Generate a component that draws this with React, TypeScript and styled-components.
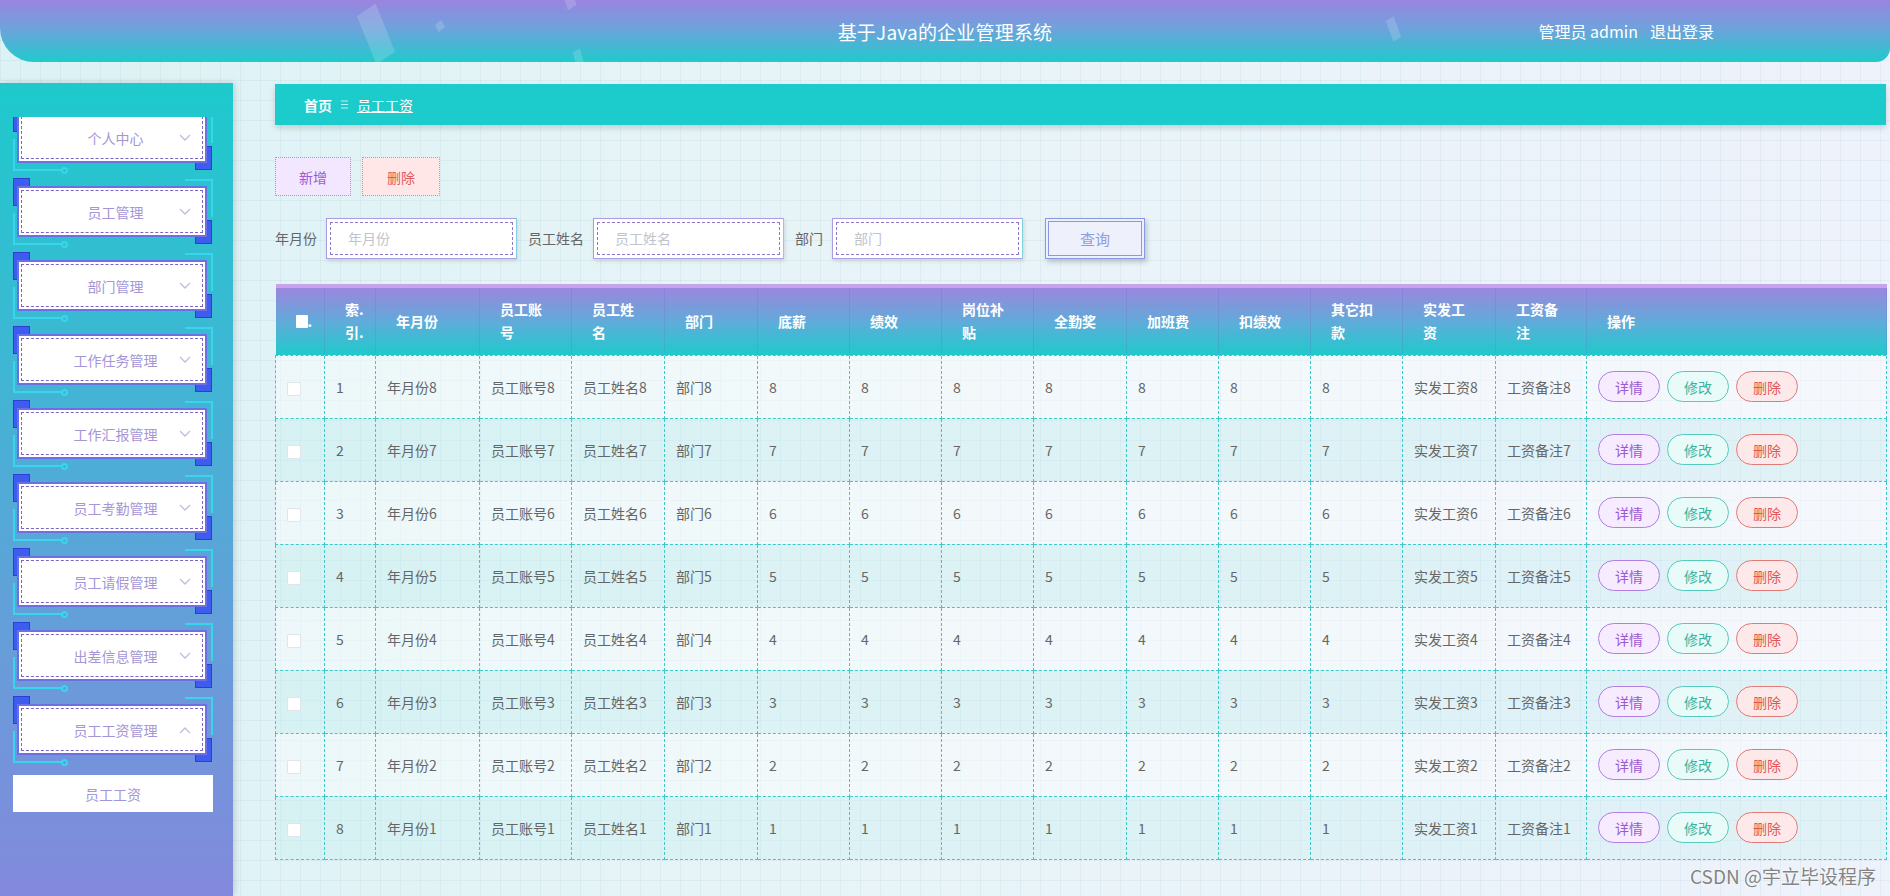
import React from 'react'
import styled, { createGlobalStyle, css } from 'styled-components'

const GlobalStyle = createGlobalStyle`
  html, body {
    margin: 0;
    padding: 0;
  }
  body {
    font-family: "Noto Sans CJK SC", "Noto Sans", sans-serif;
  }
  * {
    box-sizing: border-box;
  }
`

const Page = styled.div`
  position: relative;
  width: 1890px;
  height: 896px;
  overflow: hidden;
  background-color: #e8f4f7;
  background-image: linear-gradient(rgba(160, 195, 212, 0.16) 1px, transparent 1px),
    linear-gradient(90deg, rgba(160, 195, 212, 0.16) 1px, transparent 1px),
    linear-gradient(90deg, #dcf2f4 0%, #e7f4f7 40%, #eef2fb 100%);
  background-size: 20px 20px, 20px 20px, 100% 100%;
`

const TopBar = styled.header`
  position: relative;
  height: 62px;
  overflow: hidden;
  display: grid;
  grid-template-columns: 1fr auto 1fr;
  align-items: center;
  color: #fff;
  background: linear-gradient(180deg, #9a84e0 0%, #6fa2dc 45%, #1fcacc 100%);
  border-radius: 0 0 14px 34px;
`

const Shard = styled.span<{ $l: number; $t: number; $w: number; $h: number; $r: number }>`
  position: absolute;
  left: ${(p) => p.$l}px;
  top: ${(p) => p.$t}px;
  width: ${(p) => p.$w}px;
  height: ${(p) => p.$h}px;
  transform: rotate(${(p) => p.$r}deg) skewY(-12deg);
  background: rgba(255, 255, 255, 0.16);
`

const Title = styled.h1`
  grid-column: 2;
  margin: 0;
  font-size: 19px;
  font-weight: 400;
  letter-spacing: 0.2px;
`

const UserBox = styled.div`
  grid-column: 3;
  justify-self: end;
  display: flex;
  gap: 12px;
  padding-right: 176px;
  font-size: 16px;
`

const Body = styled.div`
  display: flex;
  align-items: flex-start;
`

const Sidebar = styled.aside`
  flex-shrink: 0;
  width: 233px;
  height: 813px;
  margin-top: 21px;
  padding-top: 34px;
  background: linear-gradient(180deg, #1dcacc 0%, #3fb6d4 35%, #62a0d9 65%, #8389dd 100%);
  box-shadow: 2px 0 6px rgba(0, 0, 0, 0.15);
`

const MenuViewport = styled.div`
  overflow: hidden;
`

const MenuList = styled.div`
  margin-top: -13px;
`

const MenuUnit = styled.div`
  position: relative;
  height: 74px;
  padding-top: 8px;
`

const Deco = styled.span<{ $l: number; $t: number; $w: number; $h: number; $kind: 'block' | 'line' }>`
  position: absolute;
  left: ${(p) => p.$l}px;
  top: ${(p) => p.$t}px;
  width: ${(p) => p.$w}px;
  height: ${(p) => p.$h}px;
  ${(p) =>
    p.$kind === 'block'
      ? css`
          background: #3f5cf0;
          box-shadow: inset 0 0 0 1px #2a40d0;
        `
      : css`
          background: #37d6ec;
        `}
`

const DecoDot = styled.span`
  position: absolute;
  left: 61px;
  top: 63px;
  width: 7px;
  height: 7px;
  border-radius: 50%;
  border: 2px solid #37d6ec;
`

const MenuBox = styled.div`
  position: relative;
  z-index: 1;
  width: 190px;
  height: 51px;
  margin-left: 17px;
  display: flex;
  align-items: center;
  justify-content: center;
  padding-left: 7px;
  background: #fff;
  border: 2px solid #6b70e2;
  outline: 1px dashed #7a66c6;
  outline-offset: -5px;
  color: #a596d6;
  font-size: 14px;
`

const Chevron = styled.svg`
  position: absolute;
  right: 14px;
  top: 50%;
  margin-top: -4px;
`

const SubItem = styled.div`
  width: 200px;
  height: 37px;
  margin: 5px 0 0 13px;
  display: flex;
  align-items: center;
  justify-content: center;
  background: #fff;
  color: #a596d6;
  font-size: 14px;
`

const Main = styled.main`
  width: 1611px;
  margin: 22px 0 0 42px;
`

const Crumbs = styled.div`
  height: 41px;
  display: flex;
  align-items: center;
  gap: 9px;
  padding-left: 29px;
  background: #1ccbcc;
  box-shadow: 0 3px 6px rgba(0, 0, 0, 0.15);
  color: #fff;
  font-size: 14px;
`

const CrumbHome = styled.span`
  font-weight: 700;
`

const CrumbCurrent = styled.span`
  text-decoration: underline;
`

const Toolbar = styled.div`
  display: flex;
  gap: 11px;
  margin-top: 32px;
`

const toolTones = {
  add: { bg: '#f3e6ff', border: '#b78de2', color: '#9a5cd6' },
  del: { bg: '#ffe7e8', border: '#e28c8c', color: '#e05a5a' },
}

const ToolButton = styled.button<{ $tone: 'add' | 'del' }>`
  width: ${(p) => (p.$tone === 'add' ? 76 : 78)}px;
  height: 39px;
  padding: 0;
  font-family: inherit;
  font-size: 14px;
  background: ${(p) => toolTones[p.$tone].bg};
  border: 1px dotted ${(p) => toolTones[p.$tone].border};
  color: ${(p) => toolTones[p.$tone].color};
`

const SearchRow = styled.div`
  display: flex;
  align-items: center;
  height: 42px;
  margin-top: 21px;
`

const Label = styled.label`
  margin-right: 9px;
  font-size: 14px;
  color: #666;
`

const InputShell = styled.div`
  width: 191px;
  height: 41px;
  margin-right: 11px;
  background: #fff;
  border: 1px solid #a99ee2;
  border-right-color: #7fd3dc;
  box-shadow: 1px 2px 4px rgba(0, 0, 0, 0.12);
  outline: 1px dashed #8c78d0;
  outline-offset: -5px;
`

const Field = styled.input`
  width: 100%;
  height: 100%;
  padding: 0 0 0 21px;
  border: none;
  background: transparent;
  font-family: inherit;
  font-size: 14px;
  color: #666;
  outline: none;
  &::placeholder {
    color: #c0c4cc;
  }
`

const SearchButton = styled.button`
  width: 100px;
  height: 41px;
  margin-left: 11px;
  padding: 0;
  font-family: inherit;
  font-size: 15px;
  color: #8d9de2;
  background: #eef1fb;
  border: 4px double #8798e6;
  box-shadow: 2px 3px 5px rgba(0, 0, 0, 0.2);
`

const Grid = styled.table`
  width: 1611px;
  margin-top: 25px;
  border-collapse: collapse;
  table-layout: fixed;
  border-top: 4px solid #c7a3ec;
`

const HeadCell = styled.th<{ $nowrap?: boolean }>`
  height: 69px;
  padding: 0 20px;
  text-align: left;
  font-size: 14px;
  font-weight: 700;
  line-height: 23px;
  color: #fff;
  white-space: ${(p) => (p.$nowrap ? 'nowrap' : 'normal')};
  background: linear-gradient(180deg, #9b86de 0%, #5aaed8 55%, #1ecacc 100%);
  border-right: 1px solid rgba(110, 100, 200, 0.22);
`

const HeadCheck = styled.span`
  display: inline-block;
  width: 12px;
  height: 13px;
  vertical-align: -1px;
  background: #fff;
  border-radius: 1px;
`

const Row = styled.tr<{ $odd: boolean }>`
  background: ${(p) => (p.$odd ? 'rgba(255, 255, 255, 0.42)' : 'rgba(196, 238, 238, 0.32)')};
`

const Cell = styled.td`
  height: 63px;
  padding: 0 11px;
  font-size: 14px;
  color: #666;
  white-space: nowrap;
  border: 1px dashed #3fc8c8;
`

const RowCheck = styled.span`
  display: inline-block;
  width: 14px;
  height: 14px;
  vertical-align: middle;
  background: #fff;
  border: 1px solid #e1e4ea;
  border-radius: 2px;
`

const Actions = styled.div`
  display: flex;
  gap: 7px;
`

const actTones = {
  view: { bg: '#f6ebff', border: '#b17fe2', color: '#9b59d2' },
  edit: { bg: '#e8fbf8', border: '#55cbbd', color: '#36b3a2' },
  del: { bg: '#fde9e9', border: '#e27a78', color: '#e05555' },
}

const ActButton = styled.button<{ $tone: 'view' | 'edit' | 'del' }>`
  width: 62px;
  height: 31px;
  padding: 0;
  border-radius: 16px;
  font-family: inherit;
  font-size: 14px;
  background: ${(p) => actTones[p.$tone].bg};
  border: 1px solid ${(p) => actTones[p.$tone].border};
  color: ${(p) => actTones[p.$tone].color};
`

const Watermark = styled.div`
  position: absolute;
  right: 14px;
  bottom: 7px;
  font-size: 19px;
  color: rgba(110, 110, 110, 0.85);
  text-shadow: 0 0 2px rgba(255, 255, 255, 0.9);
`

const menus = [
  '个人中心',
  '员工管理',
  '部门管理',
  '工作任务管理',
  '工作汇报管理',
  '员工考勤管理',
  '员工请假管理',
  '出差信息管理',
  '员工工资管理',
]

const columns = [
  { w: 49, label: <><HeadCheck />.</>, nowrap: true },
  { w: 51, label: '索.引.' },
  { w: 104, label: '年月份' },
  { w: 92, label: '员工账号' },
  { w: 93, label: '员工姓名' },
  { w: 93, label: '部门' },
  { w: 92, label: '底薪' },
  { w: 92, label: '绩效' },
  { w: 92, label: '岗位补贴' },
  { w: 93, label: '全勤奖' },
  { w: 92, label: '加班费' },
  { w: 92, label: '扣绩效' },
  { w: 92, label: '其它扣款' },
  { w: 93, label: '实发工资' },
  { w: 91, label: '工资备注' },
  { w: 300, label: '操作' },
]

const rows = Array.from({ length: 8 }, (_, i) => i + 1)

const MenuItem = ({ label, open }: { label: string; open?: boolean }) => (
  <MenuUnit>
    <Deco $kind="block" $l={13} $t={0} $w={17} $h={28} />
    <Deco $kind="line" $l={13} $t={35} $w={2} $h={32} />
    <Deco $kind="line" $l={13} $t={65} $w={49} $h={2} />
    <DecoDot />
    <Deco $kind="line" $l={185} $t={1} $w={28} $h={2} />
    <Deco $kind="line" $l={211} $t={1} $w={2} $h={38} />
    <Deco $kind="block" $l={195} $t={42} $w={17} $h={24} />
    <MenuBox>
      {label}
      <Chevron width="12" height="8" viewBox="0 0 12 8">
        <path
          d={open ? 'M1 7 L6 2 L11 7' : 'M1 1 L6 6 L11 1'}
          fill="none"
          stroke="#c2badf"
          strokeWidth="1.3"
        />
      </Chevron>
    </MenuBox>
  </MenuUnit>
)

export default function App() {
  return (
    <Page>
      <GlobalStyle />
      <TopBar>
        <Shard $l={365} $t={8} $w={22} $h={52} $r={-22} />
        <Shard $l={436} $t={22} $w={8} $h={8} $r={-30} />
        <Shard $l={565} $t={-6} $w={10} $h={14} $r={-20} />
        <Shard $l={575} $t={50} $w={8} $h={20} $r={-16} />
        <Shard $l={1389} $t={18} $w={9} $h={22} $r={-20} />
        <Title>基于Java的企业管理系统</Title>
        <UserBox>
          <span>管理员 admin</span>
          <span>退出登录</span>
        </UserBox>
      </TopBar>
      <Body>
        <Sidebar>
          <MenuViewport>
            <MenuList>
              {menus.map((m, i) => (
                <MenuItem key={m} label={m} open={i === menus.length - 1} />
              ))}
            </MenuList>
            <SubItem>员工工资</SubItem>
          </MenuViewport>
        </Sidebar>
        <Main>
          <Crumbs>
            <CrumbHome>首页</CrumbHome>
            <svg width="7" height="9" viewBox="0 0 7 9">
              <path d="M0 1 H7 M0 4.5 H7 M0 8 H7" stroke="rgba(255,255,255,0.75)" strokeWidth="1" />
            </svg>
            <CrumbCurrent>员工工资</CrumbCurrent>
          </Crumbs>
          <Toolbar>
            <ToolButton $tone="add">新增</ToolButton>
            <ToolButton $tone="del">删除</ToolButton>
          </Toolbar>
          <SearchRow>
            <Label>年月份</Label>
            <InputShell>
              <Field placeholder="年月份" />
            </InputShell>
            <Label>员工姓名</Label>
            <InputShell>
              <Field placeholder="员工姓名" />
            </InputShell>
            <Label>部门</Label>
            <InputShell>
              <Field placeholder="部门" />
            </InputShell>
            <SearchButton>查询</SearchButton>
          </SearchRow>
          <Grid>
            <colgroup>
              {columns.map((c, i) => (
                <col key={i} style={{ width: c.w }} />
              ))}
            </colgroup>
            <thead>
              <tr>
                {columns.map((c, i) => (
                  <HeadCell key={i} $nowrap={c.nowrap}>
                    {c.label}
                  </HeadCell>
                ))}
              </tr>
            </thead>
            <tbody>
              {rows.map((n) => {
                const v = 9 - n
                return (
                  <Row key={n} $odd={n % 2 === 1}>
                    <Cell>
                      <RowCheck />
                    </Cell>
                    <Cell>{n}</Cell>
                    <Cell>年月份{v}</Cell>
                    <Cell>员工账号{v}</Cell>
                    <Cell>员工姓名{v}</Cell>
                    <Cell>部门{v}</Cell>
                    <Cell>{v}</Cell>
                    <Cell>{v}</Cell>
                    <Cell>{v}</Cell>
                    <Cell>{v}</Cell>
                    <Cell>{v}</Cell>
                    <Cell>{v}</Cell>
                    <Cell>{v}</Cell>
                    <Cell>实发工资{v}</Cell>
                    <Cell>工资备注{v}</Cell>
                    <Cell>
                      <Actions>
                        <ActButton $tone="view">详情</ActButton>
                        <ActButton $tone="edit">修改</ActButton>
                        <ActButton $tone="del">删除</ActButton>
                      </Actions>
                    </Cell>
                  </Row>
                )
              })}
            </tbody>
          </Grid>
        </Main>
      </Body>
      <Watermark>CSDN @宇立毕设程序</Watermark>
    </Page>
  )
}
